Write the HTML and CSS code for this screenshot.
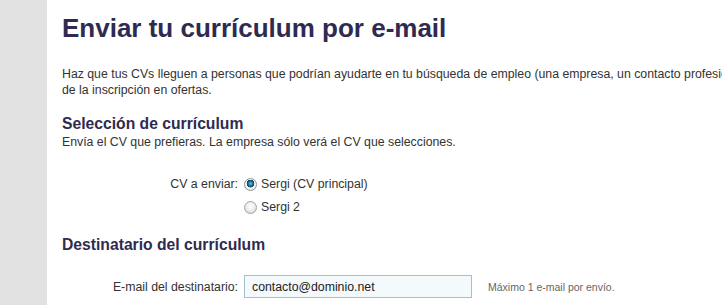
FILE: index.html
```html
<!DOCTYPE html>
<html lang="es">
<head>
<meta charset="utf-8">
<title>Enviar tu currículum por e-mail</title>
<link rel="stylesheet" href="styles.css">
</head>
<body>
<div class="page">
  <aside class="sidebar"></aside>
  <main class="main">
    <h1 class="title">Enviar tu currículum por e-mail</h1>
    <p class="intro">Haz que tus CVs lleguen a personas que podrían ayudarte en tu búsqueda de empleo (una empresa, un contacto profesional...) además<br>de la inscripción en ofertas.</p>

    <section class="section">
      <h2 class="section-title">Selección de currículum</h2>
      <p class="section-desc">Envía el CV que prefieras. La empresa sólo verá el CV que selecciones.</p>
      <div class="form-row radios-row">
        <span class="label">CV a enviar:</span>
        <div class="radios">
          <label class="radio-option"><input type="radio" name="cv" class="radio" checked> Sergi (CV principal)</label>
          <label class="radio-option"><input type="radio" name="cv" class="radio"> Sergi 2</label>
        </div>
      </div>
    </section>

    <section class="section section-dest">
      <h2 class="section-title">Destinatario del currículum</h2>
      <div class="form-row email-row">
        <label class="label" for="email">E-mail del destinatario:</label>
        <input id="email" class="text-input" type="text" value="contacto@dominio.net">
        <span class="hint">Máximo 1 e-mail por envío.</span>
      </div>
    </section>
  </main>
</div>
</body>
</html>
```

FILE: styles.css
```css
html, body {
  margin: 0;
  padding: 0;
  background: #ffffff;
  overflow: hidden;
}

body {
  font-family: "Liberation Sans", Arial, sans-serif;
  color: #333333;
  font-size: 12.3px;
}

.page {
  display: flex;
  min-height: 305px;
  width: 900px;
}

.sidebar {
  width: 47px;
  flex: none;
  background: #e2e2e2;
}

.main {
  flex: 1;
  padding-left: 15px;
}

.title {
  margin: 13px 0 0;
  font-size: 26px;
  line-height: 30px;
  font-weight: bold;
  color: #2f2b50;
}

.intro {
  margin: 23px 0 0;
  line-height: 16px;
}

.section {
  margin-top: 16px;
}

.section-title {
  margin: 0;
  font-size: 15.7px;
  line-height: 20px;
  font-weight: bold;
  color: #2f2b50;
}

.section-desc {
  margin: 0;
  line-height: 16px;
}

.form-row {
  display: grid;
  grid-template-columns: 176px auto;
  column-gap: 6px;
  align-items: center;
}

.radios-row {
  margin-top: 23px;
  align-items: start;
}

.radios-row .label {
  line-height: 22px;
}

.label {
  text-align: right;
}

.radios {
  display: flex;
  flex-direction: column;
  gap: 1px;
}

.radio-option {
  display: flex;
  align-items: center;
  gap: 4px;
  height: 22px;
}

.radio {
  appearance: none;
  -webkit-appearance: none;
  margin: 0;
  width: 13px;
  height: 13px;
  border-radius: 50%;
  border: 1px solid #a3a3a3;
  background: radial-gradient(circle at 50% 40%, #ffffff 0%, #f2f2f2 35%, #dedede 75%, #d0d0d0 100%);
  box-sizing: border-box;
}

.radio:checked {
  border-color: #8f9499;
  background:
    radial-gradient(circle at 50% 42%, #6cc3e0 0%, #2a7fa3 22%, #134d69 38%, #174a62 44%, transparent 48%),
    radial-gradient(circle at 50% 40%, #ffffff 0%, #f2f4f6 55%, #d7dbdf 100%);
}

.section-dest {
  margin-top: 17px;
}

.email-row {
  margin-top: 20px;
  grid-template-columns: 176px 228px auto;
}

.text-input {
  box-sizing: border-box;
  width: 228px;
  height: 23px;
  margin: 0;
  padding: 0 7px;
  border: 1px solid #a6bfcf;
  background: #f4f9fc;
  font-family: "Liberation Sans", Arial, sans-serif;
  font-size: 12.3px;
  color: #222222;
}

.hint {
  margin-left: 10px;
  font-size: 10.5px;
  color: #666666;
}
```
